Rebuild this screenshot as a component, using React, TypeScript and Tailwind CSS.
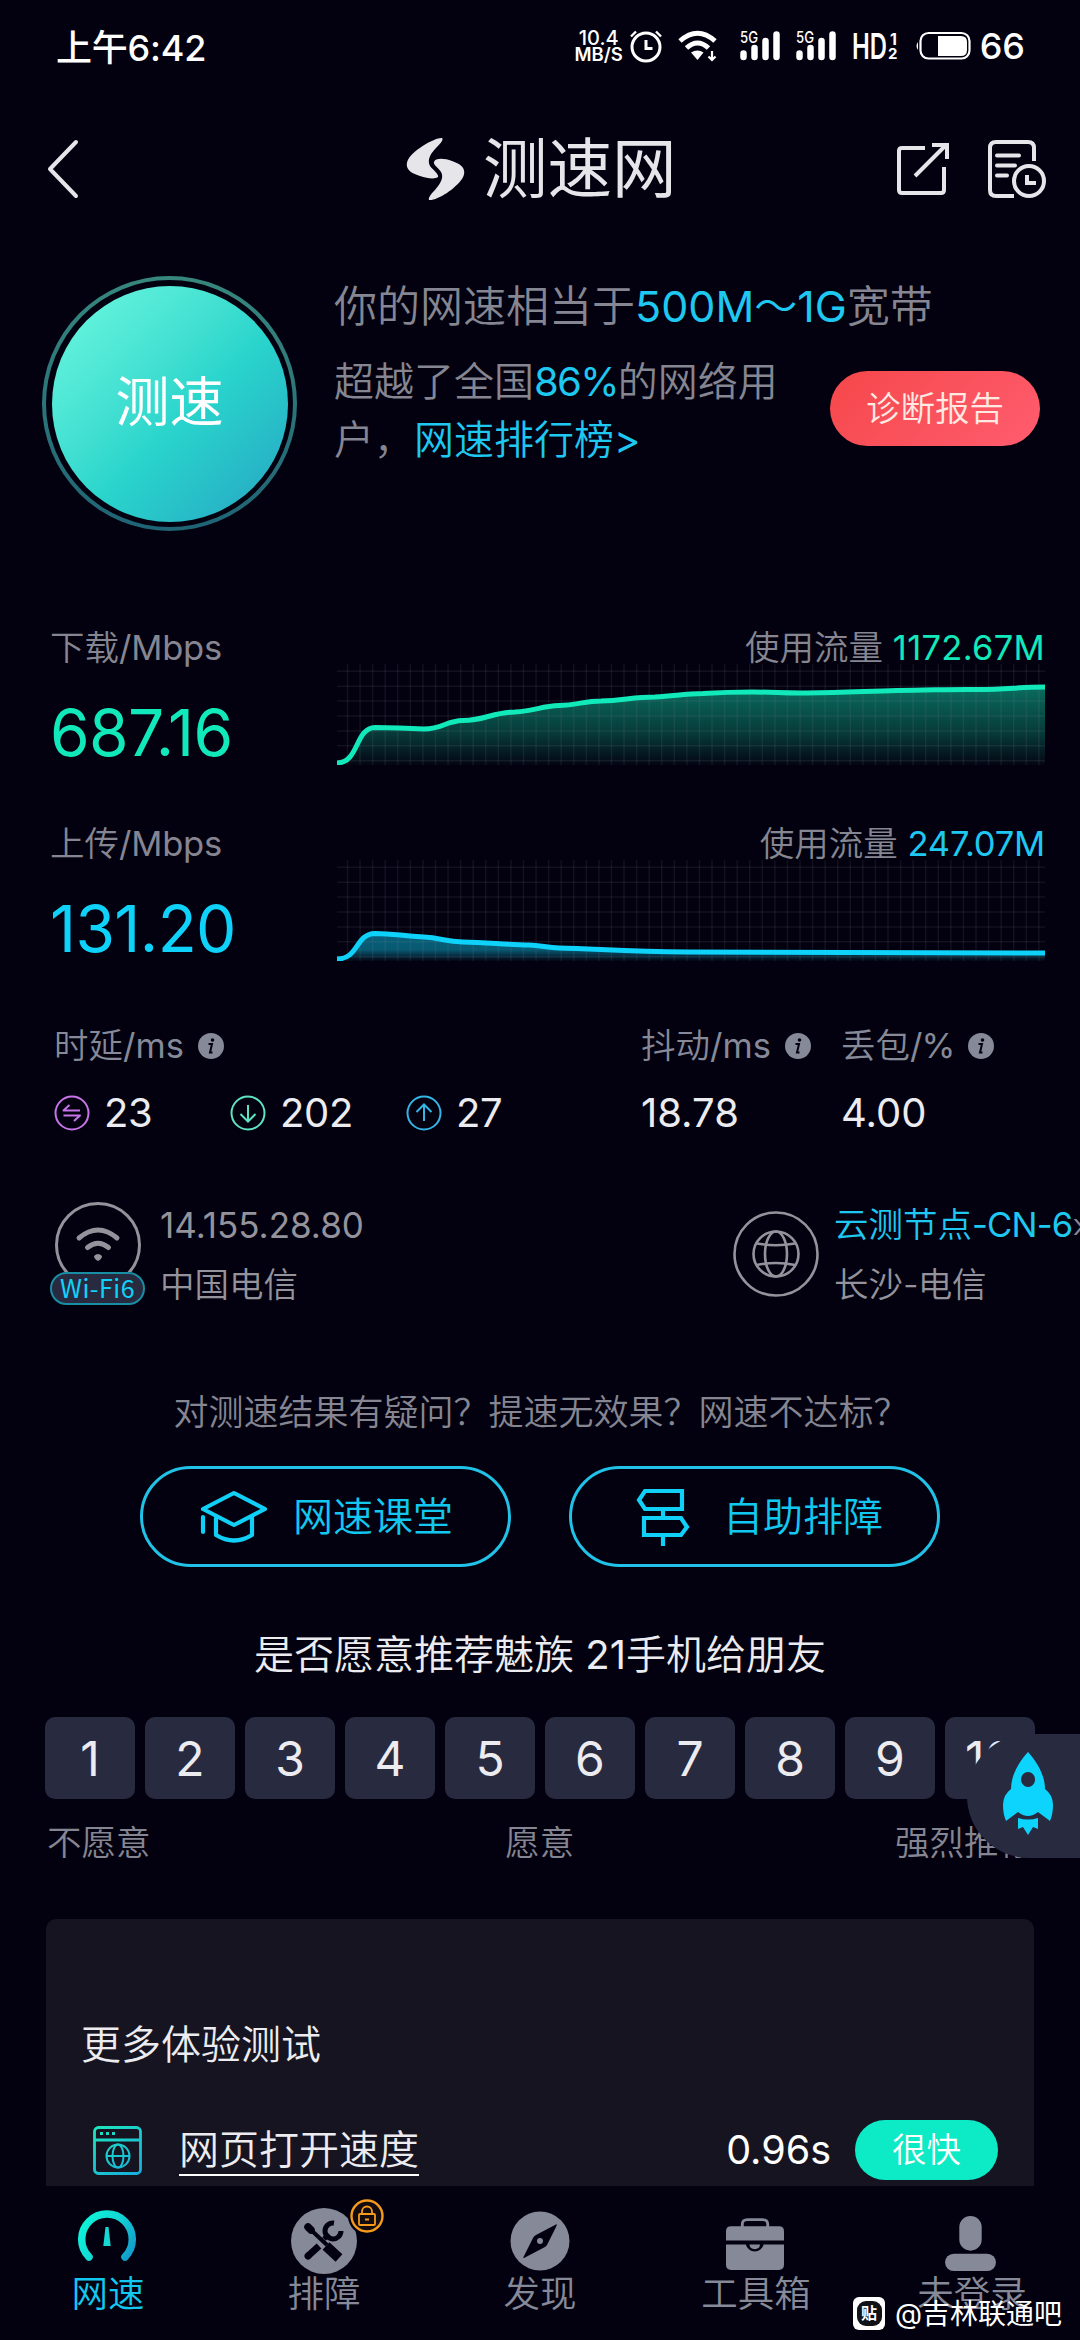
import React from 'react';

const latency = [
  { kind: 'ping', color: '#c774e8', value: '23' },
  { kind: 'down', color: '#5fe3c0', value: '202' },
  { kind: 'up', color: '#35b4e6', value: '27' },
];

const scores = [1, 2, 3, 4, 5, 6, 7, 8, 9, 10];

// y values are measured inside the 708x101 chart box
const downloadLine =
  'M0 99 C22 99 18 64 38 63.5 L62 64 L87 65 C106 65 108 57 126 56.5 C148 56.5 156 48 178 48 C198 47 204 42 222 41.5 C240 41 248 37 264 37 C286 36.5 296 33 318 33 C338 32 346 30 366 29.5 C390 28 404 28 416 28 C438 28 448 29.5 470 29 C510 29 530 27 560 26.5 C600 26 620 25 641 25.5 C672 25.5 680 23 708 23';
const uploadLine =
  'M0 99 C22 99 18 74 38 73.5 C58 73.5 64 76 87 77 C104 78 108 81.5 126 82 C150 82.5 168 84.5 192 85 C204 85.5 210 87.5 222 88 C262 89 290 91.5 350 92 C420 92.5 560 93 708 93';

const StatusBar = () => (
  <div className="h-[92px] flex justify-between items-center pl-[56px] pr-[55px] text-white shrink-0">
    <span className="text-[36px] leading-none font-medium tracking-[-0.2px] mt-[3px]">上午6:42</span>
    <div className="flex items-center">
      <div className="w-[46px] mr-[7px] flex flex-col items-center leading-none font-semibold">
        <span className="text-[20px] leading-[16px] font-medium">10.4</span>
        <span className="text-[18.5px] leading-[16px]">MB/S</span>
      </div>
      <svg width="34" height="34" viewBox="0 0 34 34" fill="none" stroke="white" className="mr-[15px]">
        <circle cx="17" cy="18" r="14" strokeWidth="3" />
        <path d="M17 11v8.5h6.5" strokeWidth="3" />
        <path d="M2 7.5L7 2.5M32 7.5L27 2.5" strokeWidth="2.4" />
      </svg>
      <svg width="40" height="32" viewBox="0 0 40 32" fill="none" stroke="white" className="mr-[22px]">
        <path d="M2 11Q19.5-4.5 37 11" strokeWidth="5" />
        <path d="M8.5 18Q19.5 8 30.5 18" strokeWidth="5" />
        <path d="M13 22.5Q19.5 18.5 25.5 22.5L19.5 30Z" fill="white" stroke="none" />
        <path d="M34 21v8M30.5 26.5L34 30l3.5-3.5" strokeWidth="2.2" />
      </svg>
      {[0, 1].map(i => (
        <svg key={i} width="41" height="32" viewBox="0 0 41 32" className="mr-[15px] overflow-visible">
          <text x="0" y="13" fontSize="16" fontWeight="500" fill="white" textLength="18" lengthAdjust="spacingAndGlyphs">5G</text>
          <g stroke="white" strokeWidth="6.5" strokeLinecap="round">
            <path d="M3.5 23.5v3.5M14.5 18v9M25.5 11v16M36.5 4.5v22.5" />
          </g>
        </svg>
      ))}
      <svg width="46" height="30" viewBox="0 0 46 30" fill="white" className="mr-[17px] overflow-visible">
        <text x="0" y="27.5" fontSize="35" fontWeight="600" textLength="35" lengthAdjust="spacingAndGlyphs">HD</text>
        <text x="38" y="13.5" fontSize="16" fontWeight="700">1</text>
        <text x="36" y="28" fontSize="15" fontWeight="700">2</text>
      </svg>
      <svg width="56" height="30" viewBox="0 0 56 30" fill="none" className="mr-[9px]">
        <path d="M3 11q-3 4 0 8z" fill="white" />
        <rect x="5.5" y="2" width="49" height="25.5" rx="8" stroke="white" strokeWidth="2.2" />
        <path d="M23 5h23q6 0 6 6v8q0 6-6 6h-23z" fill="white" />
      </svg>
      <span className="text-[36px] leading-none font-medium">66</span>
    </div>
  </div>
);

const Header = () => (
  <div className="h-[154px] flex items-center pl-[46px] pr-[33px] text-[#e6e6ea] shrink-0">
    <svg width="34" height="60" viewBox="0 0 34 60" fill="none" stroke="currentColor" strokeWidth="4" strokeLinecap="round" strokeLinejoin="round">
      <path d="M30 3L4 30l26 27" />
    </svg>
    <div className="flex items-center ml-[326px]">
      <svg width="60" height="64" viewBox="0 0 60 64" fill="currentColor">
        <path d="M36 1C30 0 9 12 3 21C-3 31 4 36 14 39C22 42 30 42 32 40C33 37 27 33 24 29C21 24 24 17 30 11C34 7 38 3 36 1Z" />
        <path d="M23 63C31 64 49 52 56 42C62 32 55 27 46 24C38 21 29 21 28 25C27 28 33 31 35 35C38 40 35 46 29 53C25 57 22 61 23 63Z" />
      </svg>
      <span className="ml-[17px] text-[64.5px] leading-none font-normal h-[64px]">测速网</span>
    </div>
    <svg width="54" height="54" viewBox="0 0 54 54" fill="none" stroke="currentColor" strokeWidth="4" className="ml-auto mr-[37px]">
      <path d="M29 6H6q-3 0-3 3v39q0 3 3 3h39q3 0 3-3V25" />
      <path d="M19 34L50 3M36 3H51V17" />
    </svg>
    <svg width="60" height="60" viewBox="0 0 60 60" fill="none" stroke="currentColor" strokeWidth="4">
      <path d="M27 57H9q-6 0-6-6V9q0-6 6-6h32q6 0 6 6v13" />
      <path d="M10 16.5H32M10 26.5H28M10 36.5H20" strokeLinecap="round" />
      <circle cx="42" cy="42" r="15" />
      <path d="M40 36v8h9" />
    </svg>
  </div>
);

const Chart = ({ id, line, color, top }: { id: string; line: string; color: string; top: number }) => (
  <svg width="708" height="101" viewBox="0 0 708 101" fill="none">
    <defs>
      <linearGradient id={id} gradientUnits="userSpaceOnUse" x1="0" y1={top} x2="0" y2="101">
        <stop offset="0" stopColor={color} stopOpacity="0.46" />
        <stop offset="0.6" stopColor={color} stopOpacity={id === 'up' ? 0.42 : 0.24} />
        <stop offset="1" stopColor={color} stopOpacity="0.02" />
      </linearGradient>
    </defs>
    <path d={`${line}V101H0Z`} fill={`url(#${id})`} />
    <g stroke="#8c8ca0" strokeOpacity="0.12" strokeWidth="1.5">
      {Array.from({ length: 56 }, (_, i) => (
        <path key={i} d={`M${10.5 + i * 12.57} 0V101`} />
      ))}
      {Array.from({ length: 7 }, (_, i) => (
        <path key={i} d={`M0 ${7.3 + i * 14.9}H708`} />
      ))}
    </g>
    <path d={line} stroke={color} strokeWidth="5" />
  </svg>
);

const InfoIcon = () => (
  <svg width="26" height="26" viewBox="0 0 26 26">
    <circle cx="13" cy="13" r="13" fill="#858998" />
    <circle cx="14.5" cy="7" r="1.8" fill="#04020f" />
    <path d="M10.5 11h3.5l-2 8.5h2.5" stroke="#04020f" strokeWidth="2" fill="none" />
  </svg>
);

const LatencyIcon = ({ kind, color }: { kind: string; color: string }) => (
  <svg width="36" height="36" viewBox="0 0 36 36" fill="none" stroke={color} strokeWidth="2">
    <circle cx="18" cy="18" r="16.5" />
    {kind === 'ping' && <path d="M26 15.5H9.5L15.5 10M9.5 20.5H26L20 26" strokeLinejoin="round" />}
    {kind === 'down' && <path d="M18 10V26.5M10.5 19L18 26.5L25.5 19" />}
    {kind === 'up' && <path d="M18 26V9.5M10.5 17L18 9.5L25.5 17" />}
  </svg>
);

const NavItem = ({ label, active, children }: { label: string; active?: boolean; children: React.ReactNode }) => (
  <div className="flex flex-col items-center w-[216px]">
    <div className="h-[87px] flex justify-center items-start">{children}</div>
    <span className={`text-[36.5px] leading-[42px] ${active ? 'text-[#12c8f0]' : 'text-[#858998]'}`}>{label}</span>
  </div>
);

const App: React.FC = () => {
  return (
    <div
      className="relative w-[1080px] h-[2340px] overflow-hidden bg-[#03010f] flex flex-col font-[350] whitespace-nowrap font-['Inter','Noto_Sans_CJK_SC',sans-serif]"
    >
      <StatusBar />
      <Header />

      {/* Summary */}
      <div className="h-[366px] pt-[30px] pl-[42px] flex items-start shrink-0">
        <div className="w-[255px] h-[255px] rounded-full p-[4px] bg-linear-to-b from-[#37877d] to-[#1f6475] shrink-0">
          <div className="w-full h-full rounded-full bg-[#03010f] p-[5.5px]">
            <div className="w-full h-full rounded-full bg-linear-135 from-[#62f3dc] from-10% via-[#2ad5cc] via-55% to-[#27a9c4] to-95% flex items-center justify-center">
              <span className="text-[54px] leading-none font-normal text-white -mt-[1px]">测速</span>
            </div>
          </div>
        </div>
        <div className="ml-[37px] w-[496px] text-[#858691]">
          <p className="text-[43px] leading-[58px] -mt-[2px]">
            你的网速相当于<span className="text-[#1ec8f0] font-normal">500M<span className="font-['Noto_Sans_CJK_SC'] font-[350]">～</span>1G</span>宽带
          </p>
          <p className="w-[460px] mt-[18px] text-[40px] leading-[58px] whitespace-normal">
            超越了全国<span className="text-[#1ec8f0] font-normal tracking-[-1.7px]">86%</span>的网络用户，<span className="text-[#1ec8f0]">网速排行榜<span className="font-normal tracking-[-1px]">&gt;</span></span>
          </p>
        </div>
        <button className="mt-[95px] w-[210px] h-[75px] rounded-full bg-linear-135 from-[#f5474a] to-[#ff5c6e] text-[#ffe9e2] text-[34.5px] leading-none pt-[2px]">
          诊断报告
        </button>
      </div>

      {/* Speed charts */}
      <div className="h-[196px] flex pl-[50px] pr-[35px] shrink-0">
        <div className="w-[287px]">
          <p className="text-[34.5px] leading-[44px] pt-[14px] text-[#858691]">下载<span className="font-normal tracking-[-0.2px]">/Mbps</span></p>
          <p className="text-[64px] leading-[70px] mt-[28px] text-[#12e9bb] font-normal tracking-[-0.6px]">687.16</p>
        </div>
        <div className="w-[708px]">
          <p className="text-[34.5px] leading-[44px] h-[52px] pt-[14px] text-right text-[#858691]">
            使用流量 <span className="text-[#12e9bb] font-normal tracking-[0.3px]">1172.67M</span>
          </p>
          <Chart id="down" line={downloadLine} color="#12e9bb" top={24} />
        </div>
      </div>
      <div className="h-[196px] flex pl-[50px] pr-[35px] shrink-0">
        <div className="w-[287px]">
          <p className="text-[34.5px] leading-[44px] pt-[14px] text-[#858691]">上传<span className="font-normal tracking-[-0.2px]">/Mbps</span></p>
          <p className="text-[64px] leading-[70px] mt-[28px] text-[#0fd2fa] font-normal tracking-[-0.6px]">131.20</p>
        </div>
        <div className="w-[708px]">
          <p className="text-[34.5px] leading-[44px] h-[52px] pt-[14px] text-right text-[#858691]">
            使用流量 <span className="text-[#1ec8f0] font-normal tracking-[-0.2px]">247.07M</span>
          </p>
          <Chart id="up" line={uploadLine} color="#0fd2fa" top={73} />
        </div>
      </div>

      {/* Latency / jitter / loss */}
      <div className="h-[180px] pt-[20px] pl-[54px] flex shrink-0">
        <div className="w-[587px]">
          <div className="flex items-center h-[44px] gap-[14px] text-[34.5px] leading-none text-[#858998]"><span>时延<span className="font-normal">/ms</span></span> <InfoIcon /></div>
          <div className="flex items-center h-[50px] mt-[20px] text-[40px] leading-none font-normal text-[#ececf0]">
            {latency.map(item => (
              <div key={item.kind} className="w-[176px] flex items-center gap-[14px] tracking-[-0.3px]">
                <LatencyIcon kind={item.kind} color={item.color} />
                {item.value}
              </div>
            ))}
          </div>
        </div>
        <div className="w-[200px]">
          <div className="flex items-center h-[44px] gap-[14px] text-[34.5px] leading-none text-[#858998]"><span>抖动<span className="font-normal">/ms</span></span> <InfoIcon /></div>
          <div className="flex items-center h-[50px] mt-[20px] text-[40px] leading-none font-normal text-[#ececf0]">18.78</div>
        </div>
        <div>
          <div className="flex items-center h-[44px] gap-[14px] text-[34.5px] leading-none text-[#858998]"><span>丢包<span className="font-normal tracking-[-1px]">/%</span></span> <InfoIcon /></div>
          <div className="flex items-center h-[50px] mt-[20px] text-[40px] leading-none font-normal text-[#ececf0]">4.00</div>
        </div>
      </div>

      {/* Network and node */}
      <div className="h-[206px] pt-[18px] pl-[50px] flex items-start text-[#94939c] shrink-0">
        <div className="w-[95px] flex flex-col items-center shrink-0">
          <svg width="86" height="70" viewBox="0 0 86 70" fill="none" stroke="#94939c" strokeLinecap="round">
            <circle cx="43" cy="43" r="41.5" strokeWidth="3" />
            <path d="M24 36Q43 20 62 36M32.5 45.5Q43 37 53.5 45.5" strokeWidth="5" />
            <path d="M39 54q4-4 8 0q0 3-4 5q-4-2-4-5z" fill="#94939c" stroke="none" />
          </svg>
          <span className="w-[95px] h-[33px] rounded-full border-2 border-[#188ea5] bg-[#282a40] text-[#0fd2fa] text-[25px] leading-[27px] text-center font-normal font-['Noto_Sans_CJK_SC'] tracking-[0.5px]">Wi-Fi6</span>
        </div>
        <div className="ml-[15px] w-[573px] shrink-0">
          <p className="text-[35px] leading-[46px] font-normal">14.155.28.80</p>
          <p className="text-[34.5px] leading-[46px] mt-[14px]">中国电信</p>
        </div>
        <svg width="86" height="86" viewBox="0 0 86 86" fill="none" stroke="#94939c" strokeWidth="2.6" className="mt-[9px] shrink-0">
          <circle cx="43" cy="43" r="41.5" />
          <circle cx="43" cy="43" r="22.5" />
          <ellipse cx="43" cy="43" rx="11" ry="22.5" />
          <path d="M24 32.5Q43 36 62 32.5M24 54Q43 50 62 54" />
        </svg>
        <div className="ml-[15px] shrink-0">
          <p className="text-[34.5px] leading-[46px] text-[#1ec8f0]">云测节点<span className="font-normal tracking-[-0.8px]">-CN-6</span><span className="text-[#858998]">›</span></p>
          <p className="text-[34.5px] leading-[46px] mt-[14px]">长沙<span className="tracking-[-1px]">-</span>电信</p>
        </div>
      </div>

      {/* Help */}
      <div className="h-[224px] flex flex-col items-center shrink-0">
        <p className="text-[35px] leading-[44px] text-[#858691] ml-[2px]">对测速结果有疑问？提速无效果？网速不达标？</p>
        <div className="flex gap-[58px] mt-[32px] text-[#12c8f0] text-[40px] leading-none">
          <button className="w-[371px] h-[101px] rounded-full border-[3px] border-[#21c2e8] flex items-center pl-[56px] gap-[24px]">
            <svg width="70" height="56" viewBox="0 0 70 56" fill="none" stroke="#10d0f8" strokeWidth="4.2" strokeLinejoin="round" strokeLinecap="round">
              <path d="M35 4L66 20L35 36L4 20Z" />
              <path d="M17 29V46Q35 57 53 46V29" />
              <path d="M4 28V43" />
            </svg>
            网速课堂
          </button>
          <button className="w-[371px] h-[101px] rounded-full border-[3px] border-[#21c2e8] flex items-center pl-[63px] gap-[32px]">
            <svg width="56" height="60" viewBox="0 0 56 60" fill="none" stroke="#10d0f8" strokeWidth="4.2">
              <path d="M10 4H47V22H10L4 13Z" />
              <path d="M9 31H46L52 40L46 48H9ZM28 22V31M28 48V59" />
            </svg>
            自助排障
          </button>
        </div>
      </div>

      {/* Recommend score */}
      <div className="h-[305px] pt-[16px] shrink-0">
        <p className="text-center text-[40px] leading-[50px] text-[#ececf0]">是否愿意推荐魅族 <span className="font-normal">21</span>手机给朋友</p>
        <div className="flex gap-[10px] mt-[37px] pl-[45px]">
          {scores.map(n => (
            <div key={n} className="w-[90px] h-[82px] rounded-[10px] bg-[#282a40] text-[#ececf0] text-[48px] leading-none font-normal flex items-center justify-center pt-[2px]">
              {n}
            </div>
          ))}
        </div>
        <div className="flex justify-between mt-[22px] pl-[47px] pr-[47px] text-[34.5px] leading-[44px] text-[#858691]">
          <span>不愿意</span>
          <span className="ml-[34px]">愿意</span>
          <span>强烈推荐</span>
        </div>
      </div>

      {/* More tests */}
      <div className="mx-[46px] h-[267px] rounded-t-[10px] bg-[#161421] shrink-0 text-[#ececf0]">
        <p className="pt-[101px] pl-[35px] text-[40px] leading-[50px]">更多体验测试</p>
        <div className="flex items-center mt-[50px] pl-[46px] pr-[36px] h-[60px]">
          <svg width="51" height="51" viewBox="0 0 51 51" fill="none" stroke="url(#web)" strokeWidth="2.8">
            <defs>
              <linearGradient id="web" gradientUnits="userSpaceOnUse" x1="5" y1="0" x2="40" y2="51">
                <stop offset="0" stopColor="#1ee6bc" />
                <stop offset="1" stopColor="#18b0dc" />
              </linearGradient>
            </defs>
            <rect x="2.5" y="2.5" width="46" height="46" rx="4" />
            <path d="M2.5 15H48.5" />
            <path d="M8 8.5h3M14 8.5h3M20 8.5h3" />
            <g strokeWidth="2">
              <circle cx="26" cy="31" r="11.5" />
              <ellipse cx="26" cy="31" rx="5.5" ry="11.5" />
              <path d="M14.5 31H37.5" />
            </g>
          </svg>
          <span className="ml-[36px] h-[52px] pt-[1px] text-[40px] leading-[50px] border-b-2 border-white">网页打开速度</span>
          <span className="ml-auto mr-[24px] pt-[2px] text-[39.5px] leading-none font-normal text-white">0.96s</span>
          <span className="w-[143px] h-[60px] rounded-full bg-[#0deac6] text-white text-[34.5px] leading-[60px] text-center">很快</span>
        </div>
      </div>

      {/* Tab bar */}
      <div className="flex h-[154px] shrink-0">
        <NavItem label="网速" active>
          <svg width="62" height="60" viewBox="0 0 62 60" fill="none" className="mt-[16px] -ml-[3px]">
            <defs>
              <linearGradient id="gauge" x1="0" y1="0.3" x2="1" y2="0.8">
                <stop offset="0" stopColor="#0ff0d8" />
                <stop offset="0.5" stopColor="#12d8d4" />
                <stop offset="1" stopColor="#12a0cc" />
              </linearGradient>
            </defs>
            <path d="M13 55A25.3 25.3 0 1 1 49 55" stroke="url(#gauge)" strokeWidth="7.5" strokeLinecap="round" />
            <path d="M29.5 25h3l2.2 19h-7.4z" fill="#16d8d4" />
          </svg>
        </NavItem>
        <NavItem label="排障">
          <div className="relative mt-[22px]">
            <svg width="66" height="66" viewBox="0 0 66 66" fill="none">
              <circle cx="33" cy="33" r="33" fill="#858998" />
              <g stroke="#03010f">
                <path d="M19 21L36 37" strokeWidth="4" />
                <path d="M17 19L20 22" strokeWidth="7.5" strokeLinecap="round" />
                <path d="M35 38L48 50" strokeWidth="10" />
                <path d="M28 38L17 48" strokeWidth="7" />
                <path d="M17 48l.1-.1" strokeWidth="7" strokeLinecap="round" />
                <path d="M33 31L38 26" strokeWidth="5" />
                <path d="M43 15A8 8 0 1 0 50 23" strokeWidth="5" />
              </g>
            </svg>
            <svg width="38" height="38" viewBox="0 0 38 38" fill="none" stroke="#f59a1a" className="absolute left-[57px] -top-[11px]">
              <circle cx="19" cy="19" r="19" fill="#03010f" stroke="none" />
              <circle cx="19" cy="19" r="15.5" strokeWidth="2.4" fill="#120b10" />
              <rect x="11" y="17" width="16" height="11" rx="1" strokeWidth="1.8" />
              <path d="M14 17v-2.5a5 5 0 0 1 10 0V17M17 22.5h4" strokeWidth="1.8" />
            </svg>
          </div>
        </NavItem>
        <NavItem label="发现">
          <svg width="60" height="60" viewBox="0 0 60 60" className="mt-[25px]">
            <circle cx="30" cy="30" r="29.5" fill="#858998" />
            <path d="M45 14Q48 12 46 16L37 34Q36 35.5 34 36.5L15 46.5Q12 48 14 45L23 27Q24 25 26 24Z" fill="#03010f" />
            <circle cx="30" cy="30" r="3" fill="#858998" />
          </svg>
        </NavItem>
        <NavItem label="工具箱">
          <svg width="58" height="53" viewBox="0 0 57 52" fill="#858998" className="mt-[32px] -ml-[2px]">
            <path d="M16 9V6q0-4.5 5-4.5h15q5 0 5 4.5v3" fill="none" stroke="#858998" strokeWidth="2.8" />
            <path d="M0 22V13q0-5 5-5H52q5 0 5 5v9z" />
            <path d="M0 26H19.5a9 9 0 0 0 17.5 0H57V46q0 5-5 5H5q-5 0-5-5z" />
            <path d="M23 26h10.5a5.3 5.3 0 0 1-10.5 0z" />
          </svg>
        </NavItem>
        <NavItem label="未登录">
          <svg width="51" height="55" viewBox="0 0 50 54" fill="#858998" className="mt-[30px] -ml-[3px]">
            <rect x="14" y="0" width="22" height="34" rx="11" />
            <rect x="0" y="37" width="50" height="17" rx="8.5" />
          </svg>
        </NavItem>
      </div>

      {/* Floating boost button */}
      <div className="absolute right-0 top-[1734px] w-[113px] h-[124px] rounded-l-full bg-[#282a40] flex justify-center pl-[9px] pt-[18px]">
        <svg width="52" height="84" viewBox="0 0 52 84" fill="#0cd4fc">
          <path fillRule="evenodd" d="M26 0C36 11 43 24 43 37Q51 43 51 53Q51 62 48 69Q44 66 36 60Q31 64 26 64Q21 64 16 60Q8 66 4 69Q1 62 1 53Q1 43 9 37C9 24 16 11 26 0ZM26 20a7 7.5 0 1 0 .1 0Z" />
          <path d="M16 66Q26 69 36 66V77L31 75L26 83L21 75L16 77Z" />
        </svg>
      </div>

      {/* Watermark */}
      <div className="absolute left-[853px] top-[2297px] flex items-center gap-[10px] text-white">
        <div className="w-[32px] h-[33px] rounded-[6px] bg-white flex items-center justify-center">
          <span className="w-[25px] h-[25px] rounded-[9px] bg-[#111118] text-[16px] leading-[24px] font-bold text-center">贴</span>
        </div>
        <span className="text-[28px] leading-[32px] font-normal">@吉林联通吧</span>
      </div>
    </div>
  );
};

export default App;
